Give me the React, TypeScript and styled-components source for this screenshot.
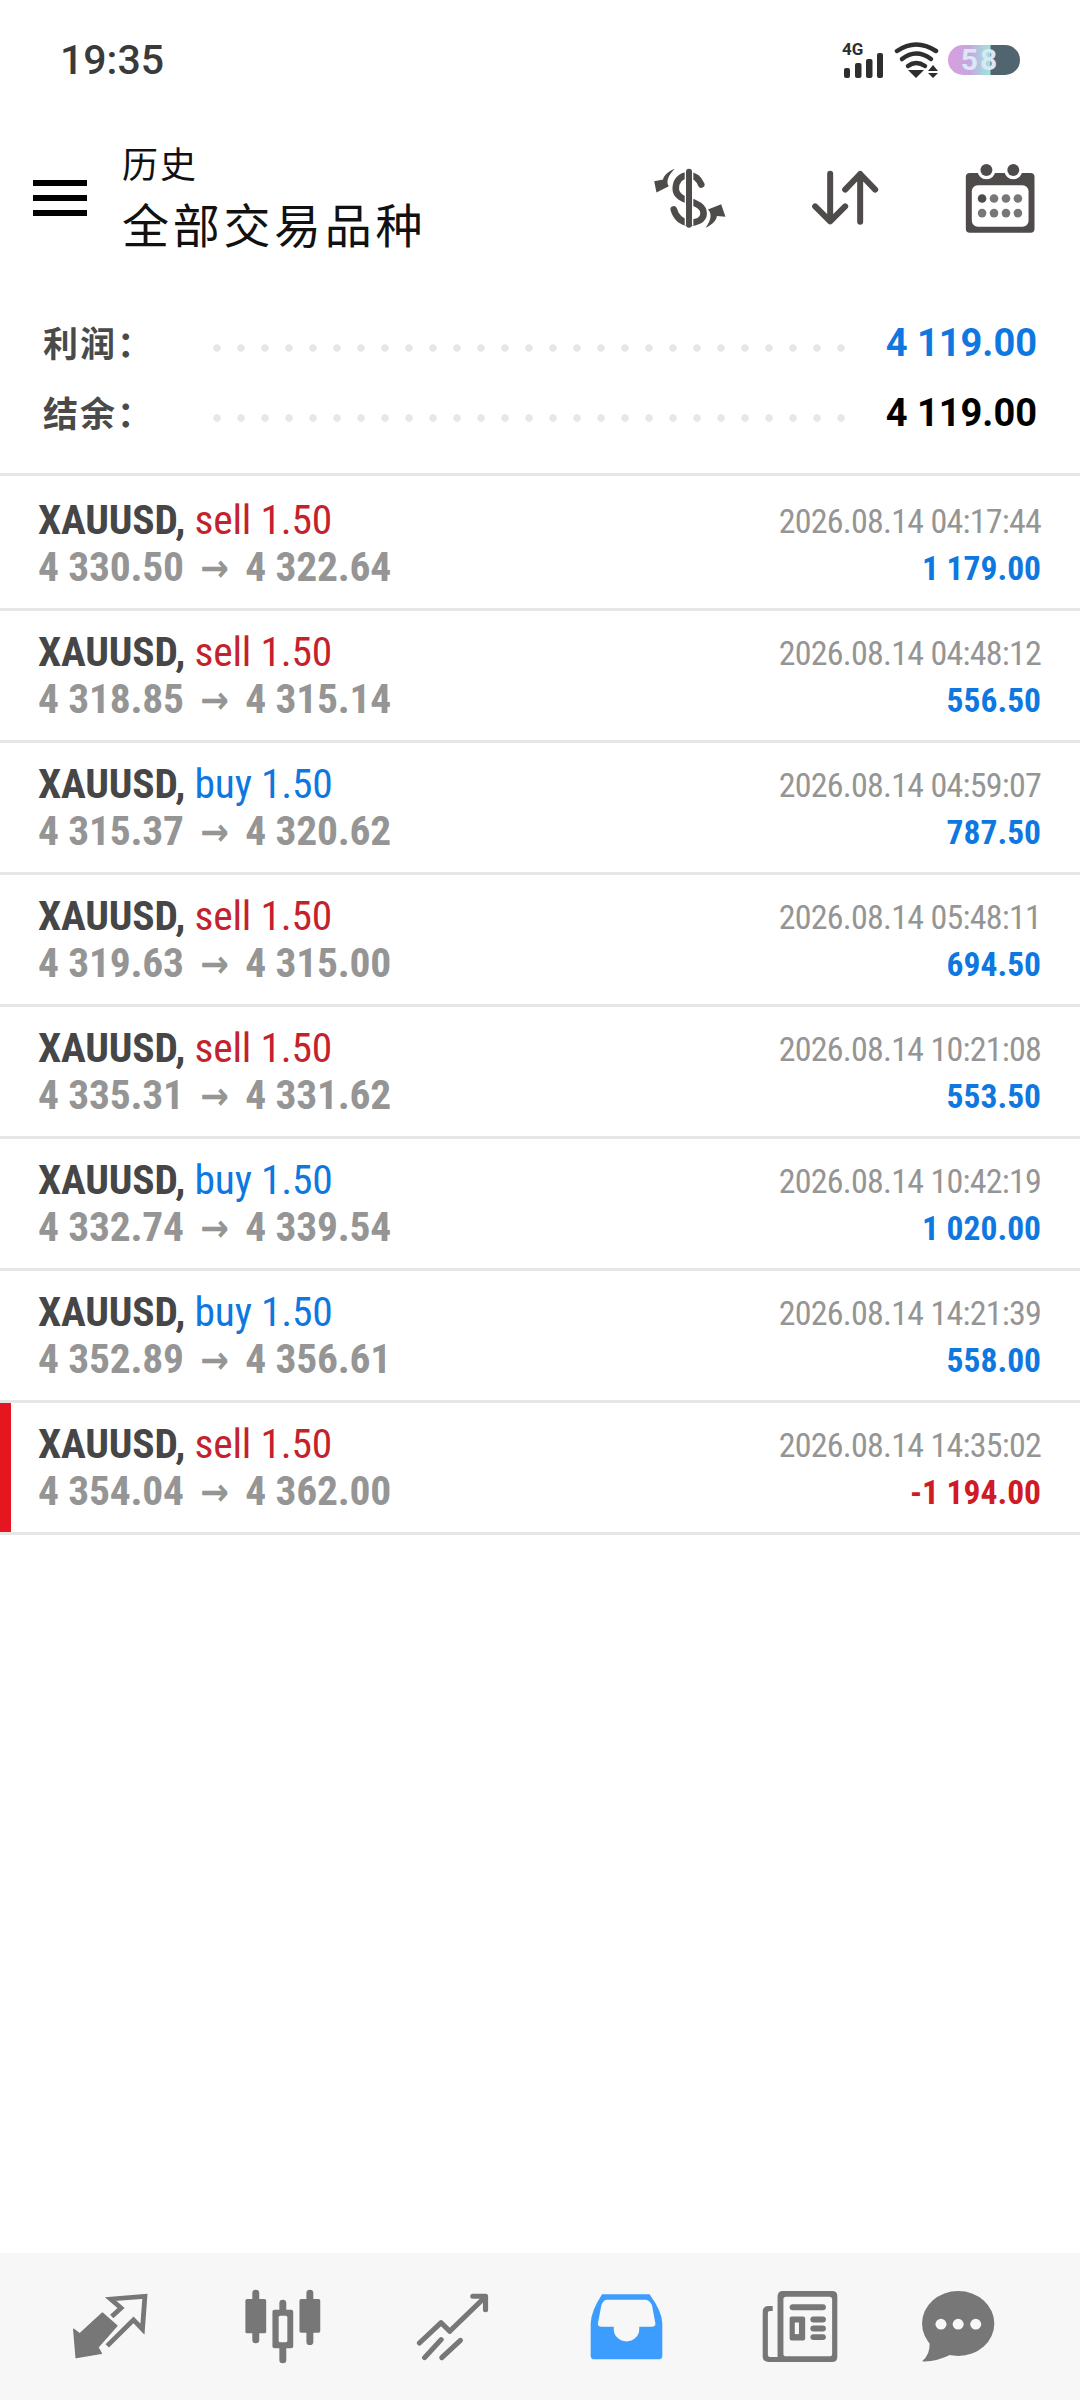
import React from "react";
import styled, { createGlobalStyle } from "styled-components";

const Global = createGlobalStyle`
  html, body { margin: 0; padding: 0; background: #fff; }
  * { box-sizing: border-box; }
`;

const CJK = `"Noto Sans CJK SC", "Noto Sans", sans-serif`;
const RB = `Roboto, "Liberation Sans", sans-serif`;
const BLUE = "#0e78e0";
const RED = "#c4222b";
const GREY = "#959595";
const ICON = "#777777";
const HEAD = "#4f4b4b";
const BAR = "#f7f7f7";

const Page = styled.div`
  width: 1080px; height: 2400px; display: flex; flex-direction: column; background: #fff; overflow: hidden;
`;
const StatusBar = styled.div`
  height: 120px; flex: none; display: flex; align-items: center; padding: 0 60px 0 60px;
`;
const Clock = styled.div`
  font: 500 41px/1 Roboto, sans-serif; color: #3a3a3a;
`;
const StatusRight = styled.div`
  margin-left: auto; display: flex; align-items: center;
`;
const Pill = styled.div`
  width: 72px; height: 30px; border-radius: 15px; margin-left: 8px;
  display: flex; align-items: center; justify-content: center; padding-right: 8px;
  background: linear-gradient(90deg, #d9a0dd 0%, #c6a6e0 30%, #a5d7dc 50%, #a5e0d8 58%, #50656f 60%, #50656f 100%);
  font: 700 30px/1 Roboto, sans-serif; color: #dbe6f6; letter-spacing: 2px;
`;
const Header = styled.div`
  height: 156px; flex: none; display: flex; align-items: center; padding: 0 42px 0 33px;
`;
const Burger = styled.div`
  width: 54px; height: 36px; flex: none; display: flex; flex-direction: column; justify-content: space-between;
  & > i { display: block; height: 6px; background: #000; }
`;
const TitleBlock = styled.div`
  margin-left: 35px; display: flex; flex-direction: column; font-family: ${CJK}; color: #111;
`;
const Sub = styled.div` font-size: 36px; line-height: 50px; letter-spacing: 2px; `;
const Title = styled.div` font-size: 47px; line-height: 72px; letter-spacing: 3.7px; `;
const HeaderIcons = styled.div`
  margin-left: auto; display: flex; align-items: center; gap: 82px;
`;
const Summary = styled.div`
  padding: 32px 43px 26px 43px; display: flex; flex-direction: column;
`;
const SumRow = styled.div`
  height: 70px; display: flex; align-items: center;
`;
const SumLabel = styled.div`
  width: 162px; flex: none; font: 700 35px/1 ${CJK}; color: #4a4a4a; letter-spacing: 2px; margin-top: -3px;
`;
const Leader = styled.div`
  width: 648px; flex: none; height: 20px; margin-top: 10px;
  background-image: radial-gradient(circle at center, #e6e6e6 0, #e6e6e6 3.4px, transparent 4px);
  background-size: 24px 20px; background-repeat: repeat-x;
`;
const SumValue = styled.div<{ $c: string }>`
  margin-left: auto; font: 700 38px/1 ${RB}; color: ${(p) => p.$c};
`;
const List = styled.div` border-top: 3px solid #e6e6e6; margin-top: -1px; `;
const Row = styled.div<{ $flag?: boolean }>`
  height: 132px; border-bottom: 3px solid #e6e6e6; display: flex; justify-content: space-between; align-items: flex-start;
  padding: 17px 39px 0 38px; white-space: nowrap;
  box-shadow: ${(p) => (p.$flag ? "inset 11px 0 0 #e5161f" : "none")};
  &:first-child { height: 135px; padding-top: 20px; }
`;
const Left = styled.div` display: flex; flex-direction: column; `;
const Right = styled.div` display: flex; flex-direction: column; align-items: flex-end; padding-top: 2px; `;
const Cond = styled.div`
  font-family: ${RB}; font-stretch: 75%; font-size: 41.5px; line-height: 47px; letter-spacing: -0.2px;
`;
const Symbol = styled.span` font-weight: 700; color: #464646; `;
const Side = styled.span<{ $c: string }>` font-weight: 400; color: ${(p) => p.$c}; `;
const Prices = styled(Cond)` font-weight: 700; color: ${GREY}; `;
const Arrow = styled.span`
  font-family: "DejaVu Sans", sans-serif; font-size: 38px; font-weight: 700; line-height: 1; letter-spacing: 0; margin: 0 7px;
`;
const Stamp = styled(Cond)` font-size: 34px; font-weight: 400; color: ${GREY}; letter-spacing: -0.75px; `;
const Profit = styled(Cond)<{ $c: string }>` font-size: 33.5px; font-weight: 700; color: ${(p) => p.$c}; letter-spacing: 0; `;
const Fill = styled.div` flex: 1; `;
const TabBar = styled.div`
  height: 147px; flex: none; background: ${BAR}; display: flex; align-items: center;
`;
const Tab = styled.div<{ $ml: number }>`
  margin-left: ${(p) => p.$ml}px; display: flex;
`;

const rows = [
  ["sell", "4 330.50", "4 322.64", "2026.08.14 04:17:44", "1 179.00"],
  ["sell", "4 318.85", "4 315.14", "2026.08.14 04:48:12", "556.50"],
  ["buy", "4 315.37", "4 320.62", "2026.08.14 04:59:07", "787.50"],
  ["sell", "4 319.63", "4 315.00", "2026.08.14 05:48:11", "694.50"],
  ["sell", "4 335.31", "4 331.62", "2026.08.14 10:21:08", "553.50"],
  ["buy", "4 332.74", "4 339.54", "2026.08.14 10:42:19", "1 020.00"],
  ["buy", "4 352.89", "4 356.61", "2026.08.14 14:21:39", "558.00"],
  ["sell", "4 354.04", "4 362.00", "2026.08.14 14:35:02", "-1 194.00"],
];

const Signal = () => (
  <svg width="44" height="48" viewBox="840 36 44 48">
    <text x="842" y="55" fontFamily="Roboto, sans-serif" fontWeight="700" fontSize="17" fill="#2e2e2e">4G</text>
    <rect x="844" y="68" width="6" height="10" rx="2" fill="#2e2e2e" />
    <rect x="855" y="63" width="6.5" height="15" rx="2" fill="#2e2e2e" />
    <rect x="866" y="59" width="6.5" height="19" rx="2" fill="#2e2e2e" />
    <rect x="877" y="53" width="6" height="25" rx="2" fill="#2e2e2e" />
  </svg>
);
const Wifi = () => (
  <svg width="46" height="38" viewBox="894 41 46 38" style={{ marginLeft: 10 }}>
    <g fill="none" stroke="#2e2e2e" strokeWidth="4.5" strokeLinecap="round">
      <path d="M897 51 Q916 38 936 51" />
      <path d="M902 59 Q916 48 931 59" />
      <path d="M908 66 Q916 60 925 66" />
    </g>
    <path d="M908 70 H924 L916 78 Z" fill="#2e2e2e" />
    <path d="M928 71 L933 65 L938 71 Z M928 73 H938 L933 78 Z" fill="#2e2e2e" />
  </svg>
);
const DollarIcon = () => (
  <svg width="74" height="63" viewBox="160 500 222 190">
    <path d="M305 553 C295 530 280 525 268 525 C240 525 228 545 228 565 C228 590 255 598 270 603 C295 612 312 620 312 640 C312 660 290 668 268 668 C245 668 228 650 222 628" fill="none" stroke={HEAD} strokeWidth="20" strokeLinecap="round" />
    <line x1="268" y1="512" x2="268" y2="676" stroke="#fff" strokeWidth="26" />
    <line x1="268" y1="514" x2="268" y2="674" stroke={HEAD} strokeWidth="18" strokeLinecap="round" />
    <path d="M225 505 C200 515 190 530 190 538 L163 543 L170 577 L207 558 C198 545 205 525 225 505Z" fill={HEAD} />
    <path d="M318 683 C345 672 352 655 352 648 L378 650 L365 612 L325 628 C338 640 335 660 318 683Z" fill={HEAD} />
  </svg>
);
const SortIcon = () => (
  <svg width="72" height="60" viewBox="630 505 215 180">
    <g fill="none" stroke={HEAD} strokeWidth="18" strokeLinecap="round" strokeLinejoin="round">
      <path d="M693 522 V665 M648 620 L693 665 L738 620" />
      <path d="M783 666 V523 M738 570 L783 523 L828 570" />
    </g>
  </svg>
);
const CalendarIcon = () => (
  <svg width="75" height="73" viewBox="1090 480 225 220">
    <rect x="1098" y="513" width="207" height="180" rx="12" fill={HEAD} />
    <rect x="1116" y="550" width="171" height="125" rx="18" fill="#fff" />
    <circle cx="1160" cy="505" r="27" fill="#fff" />
    <circle cx="1241" cy="505" r="27" fill="#fff" />
    <circle cx="1160" cy="504" r="18" fill={HEAD} />
    <circle cx="1241" cy="504" r="18" fill={HEAD} />
    {[1147, 1183, 1219, 1255].map((x, i) => (
      <React.Fragment key={x}>
        <circle cx={x} cy="590" r="13" fill={i === 0 ? HEAD : "#777"} />
        <circle cx={x} cy="634" r="13" fill="#777" />
      </React.Fragment>
    ))}
  </svg>
);

const TradeIcon = () => (
  <svg width="76" height="67" viewBox="210 160 220 200" preserveAspectRatio="none">
    <path d="M298 220 L340 258 L285 322 L295 340 L222 353 L215 268 L232 282 Z" fill={ICON} stroke={ICON} strokeWidth="4" strokeLinejoin="round" />
    <path d="M325 230 L352 205 L322 178 L421 170 L414 268 L388 240 L312 318" fill="none" stroke={ICON} strokeWidth="14" />
  </svg>
);
const CandleIcon = () => (
  <svg width="78" height="75" viewBox="705 145 225 225" preserveAspectRatio="none">
    <path d="M739 157 V298 M895 157 V303 M817 187 V358" stroke={ICON} strokeWidth="20" strokeLinecap="round" />
    <rect x="709" y="175" width="60" height="103" rx="5" fill={ICON} />
    <rect x="865" y="175" width="60" height="101" rx="5" fill={ICON} />
    <rect x="787" y="207" width="60" height="116" rx="6" fill={ICON} />
    <rect x="805" y="225" width="25" height="80" rx="5" fill={BAR} />
  </svg>
);
const TrendIcon = () => (
  <svg width="74" height="70" viewBox="1210 150 215 210" preserveAspectRatio="none">
    <g fill="none" stroke={ICON} strokeWidth="15" strokeLinecap="round" strokeLinejoin="round">
      <path d="M1220 303 L1283 242 L1308 268 L1408 168 M1375 163 H1412 V203" />
      <path d="M1235 347 L1283 293 M1285 347 L1339 295" />
    </g>
  </svg>
);
const InboxIcon = () => (
  <svg width="73" height="67" viewBox="145 153 212 202" preserveAspectRatio="none">
    <path d="M180 157 H318 Q355 210 355 245 V342 Q355 353 343 353 H158 Q147 353 147 342 V245 Q147 210 180 157Z" fill="#3d9dff" />
    <path d="M195 173 H305 Q318 173 325 190 L335 245 Q335 255 325 255 H288 V262 A37 37 0 0 1 214 262 V255 H178 Q168 255 168 245 L178 190 Q183 173 195 173Z" fill={BAR} />
  </svg>
);
const NewsIcon = () => (
  <svg width="76" height="73" viewBox="645 145 220 220" preserveAspectRatio="none">
    <path d="M690 165 Q690 148 705 148 H848 Q863 148 863 163 V347 Q863 362 848 362 H665 Q647 362 647 345 V210 Q647 193 665 193 H676 V208 H668 Q662 208 662 215 V340 Q662 347 668 347 H690Z" fill={ICON} />
    <rect x="707" y="165" width="141" height="180" rx="8" fill={BAR} />
    <rect x="725" y="188" width="105" height="18" rx="9" fill={ICON} />
    <rect x="725" y="225" width="45" height="72" rx="6" fill={ICON} />
    <rect x="740" y="243" width="12" height="35" fill={BAR} />
    <rect x="785" y="225" width="45" height="18" rx="9" fill={ICON} />
    <rect x="785" y="252" width="45" height="18" rx="9" fill={ICON} />
    <rect x="785" y="278" width="45" height="18" rx="9" fill={ICON} />
  </svg>
);
const ChatIcon = () => (
  <svg width="74" height="73" viewBox="1105 145 215 220" preserveAspectRatio="none">
    <ellipse cx="1213" cy="246" rx="105" ry="98" fill={ICON} />
    <path d="M1130 305 Q1132 340 1108 360 Q1150 362 1195 338Z" fill={ICON} />
    <circle cx="1163" cy="248" r="16" fill={BAR} />
    <circle cx="1213" cy="248" r="16" fill={BAR} />
    <circle cx="1264" cy="248" r="16" fill={BAR} />
  </svg>
);

export default function App() {
  return (
    <Page>
      <Global />
      <StatusBar>
        <Clock>19:35</Clock>
        <StatusRight>
          <Signal />
          <Wifi />
          <Pill>58</Pill>
        </StatusRight>
      </StatusBar>
      <Header>
        <Burger><i /><i /><i /></Burger>
        <TitleBlock>
          <Sub>历史</Sub>
          <Title>全部交易品种</Title>
        </TitleBlock>
        <HeaderIcons>
          <DollarIcon />
          <SortIcon />
          <CalendarIcon />
        </HeaderIcons>
      </Header>
      <Summary>
        <SumRow>
          <SumLabel>利润：</SumLabel>
          <Leader />
          <SumValue $c={BLUE}>4 119.00</SumValue>
        </SumRow>
        <SumRow>
          <SumLabel>结余：</SumLabel>
          <Leader />
          <SumValue $c="#000">4 119.00</SumValue>
        </SumRow>
      </Summary>
      <List>
        {rows.map((r, i) => {
          const neg = r[4].startsWith("-");
          return (
            <Row key={i} $flag={neg}>
              <Left>
                <Cond>
                  <Symbol>XAUUSD,</Symbol>{" "}
                  <Side $c={r[0] === "buy" ? BLUE : RED}>{r[0]} 1.50</Side>
                </Cond>
                <Prices>{r[1]} <Arrow>→</Arrow> {r[2]}</Prices>
              </Left>
              <Right>
                <Stamp>{r[3]}</Stamp>
                <Profit $c={neg ? "#cf1b26" : BLUE}>{r[4]}</Profit>
              </Right>
            </Row>
          );
        })}
      </List>
      <Fill />
      <TabBar>
        <Tab $ml={72}><TradeIcon /></Tab>
        <Tab $ml={96}><CandleIcon /></Tab>
        <Tab $ml={94}><TrendIcon /></Tab>
        <Tab $ml={100}><InboxIcon /></Tab>
        <Tab $ml={99}><NewsIcon /></Tab>
        <Tab $ml={83}><ChatIcon /></Tab>
      </TabBar>
    </Page>
  );
}
